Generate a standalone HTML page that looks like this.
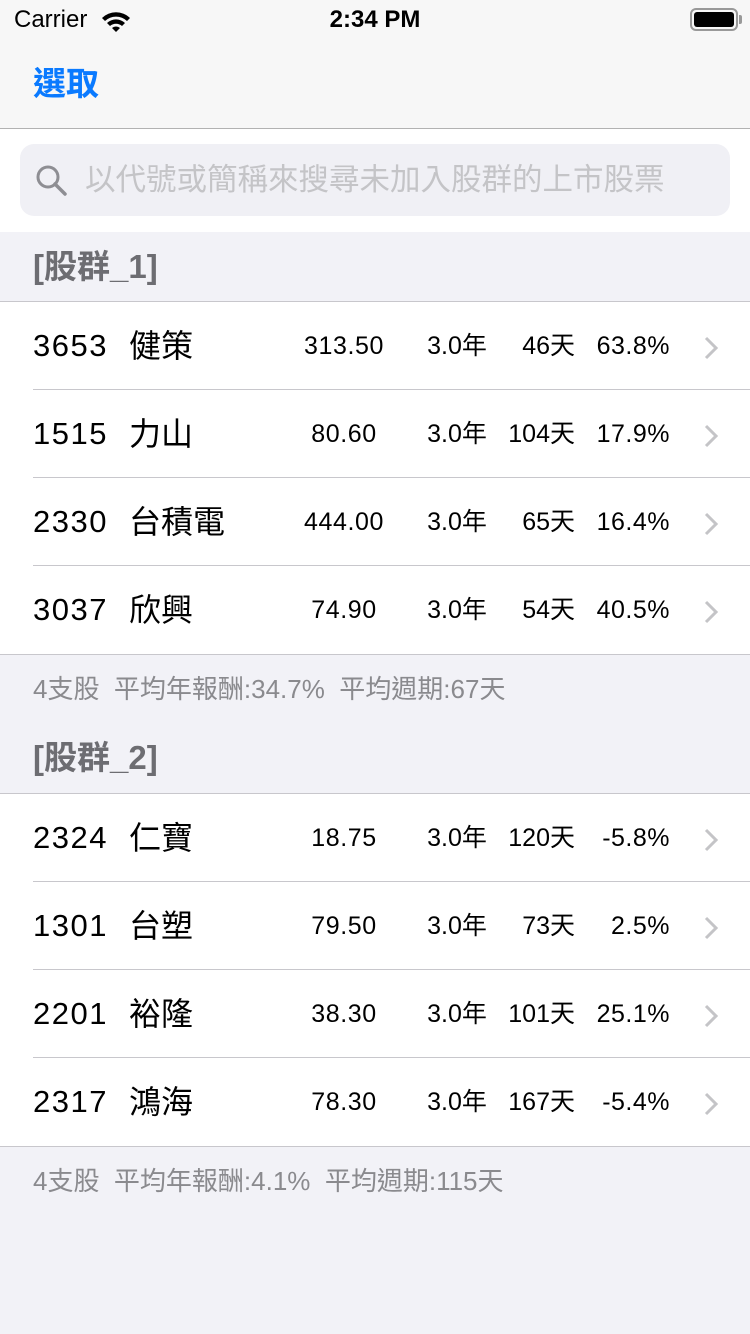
<!DOCTYPE html>
<html><head><meta charset="utf-8"><style>
*{margin:0;padding:0;box-sizing:border-box}
body{width:750px;height:1334px;background:#f2f2f7;font-family:"Liberation Sans","Noto Sans CJK TC",sans-serif;position:relative;overflow:hidden}
.a{position:absolute;white-space:nowrap}
.row{position:absolute;left:0;width:750px;height:88px;background:#fff}
.row div{line-height:88px;white-space:nowrap}
.row .l{position:absolute;left:33px;right:0;bottom:0;height:1px;background:#c8c7cc}
.code{position:absolute;left:33px;top:0;font-size:31px;letter-spacing:1.5px;color:#000}
.nm{position:absolute;left:129px;top:0;font-size:32px;color:#000}
.p{position:absolute;left:284px;width:120px;text-align:center;top:0;font-size:25px;letter-spacing:0.6px}
.y{position:absolute;left:400px;width:114px;text-align:center;top:0;font-size:25px}
.d{position:absolute;right:175px;top:0;font-size:25px}
.r{position:absolute;right:80px;top:0;font-size:25px;letter-spacing:0.5px}
.ch{position:absolute;left:703px;top:34px}
.hd{position:absolute;left:33px;font-size:33px;font-weight:bold;color:#6d6d72;line-height:40px}
.ft{position:absolute;left:33px;font-size:26px;color:#8a8a8e;line-height:30px}
.hl{position:absolute;left:0;width:750px;height:1px;background:#c8c7cc}
</style></head><body>
<div class="a" style="left:0;top:0;width:750px;height:128px;background:#f7f7f7"></div>
<div class="a" style="left:14px;top:6px;font-size:24px">Carrier</div>
<svg class="a" style="left:100px;top:10px" width="32" height="24" viewBox="0 0 32 24"><path d="M2 8 A20 20 0 0 1 30 8 L27 11 A16 16 0 0 0 5 11Z M7 13 A13 13 0 0 1 25 13 L22 16 A9 9 0 0 0 10 16Z M12 18 A6 6 0 0 1 20 18 L16 22Z" fill="#000"/></svg>
<div class="a" style="left:0;width:750px;text-align:center;top:6px;font-size:24px;font-weight:bold">2:34 PM</div>
<div class="a" style="left:690px;top:8px;width:48px;height:23px;border:2px solid #999;border-radius:6px"></div>
<div class="a" style="left:694px;top:12px;width:40px;height:15px;background:#000;border-radius:3px"></div>
<div class="a" style="left:739px;top:15px;width:3px;height:9px;background:#999;border-radius:0 2px 2px 0"></div>
<div class="a" style="left:33px;top:64px;font-size:33px;color:#0a7aff;font-weight:bold;line-height:40px">選取</div>
<div class="hl" style="top:128px;background:#b2b2b2"></div>
<div class="a" style="left:0;top:129px;width:750px;height:103px;background:#fff"></div>
<div class="a" style="left:20px;top:144px;width:710px;height:72px;background:#f0f0f5;border-radius:14px"></div>
<svg class="a" style="left:35px;top:164px" width="34" height="34" viewBox="0 0 34 34"><circle cx="13" cy="13" r="10" fill="none" stroke="#8e8e93" stroke-width="3"/><path d="M20 20 L30 30" stroke="#8e8e93" stroke-width="3.5" stroke-linecap="round"/></svg>
<div class="a" style="left:85px;top:160px;font-size:30.5px;color:#c4c4c7;line-height:40px">以代號或簡稱來搜尋未加入股群的上市股票</div>

<div class="hd" style="top:247px">[股群_1]</div>
<div class="hl" style="top:301px"></div>
<div class="row" style="top:302px"><div class="code">3653</div><div class="nm">健策</div><div class="p">313.50</div><div class="y">3.0年</div><div class="d">46天</div><div class="r">63.8%</div><svg class="ch" width="16" height="24"><path d="M3 2 L13 12 L3 22" fill="none" stroke="#c4c4c7" stroke-width="3"/></svg><div class="l"></div></div>
<div class="row" style="top:390px"><div class="code">1515</div><div class="nm">力山</div><div class="p">80.60</div><div class="y">3.0年</div><div class="d">104天</div><div class="r">17.9%</div><svg class="ch" width="16" height="24"><path d="M3 2 L13 12 L3 22" fill="none" stroke="#c4c4c7" stroke-width="3"/></svg><div class="l"></div></div>
<div class="row" style="top:478px"><div class="code">2330</div><div class="nm">台積電</div><div class="p">444.00</div><div class="y">3.0年</div><div class="d">65天</div><div class="r">16.4%</div><svg class="ch" width="16" height="24"><path d="M3 2 L13 12 L3 22" fill="none" stroke="#c4c4c7" stroke-width="3"/></svg><div class="l"></div></div>
<div class="row" style="top:566px"><div class="code">3037</div><div class="nm">欣興</div><div class="p">74.90</div><div class="y">3.0年</div><div class="d">54天</div><div class="r">40.5%</div><svg class="ch" width="16" height="24"><path d="M3 2 L13 12 L3 22" fill="none" stroke="#c4c4c7" stroke-width="3"/></svg></div>
<div class="hl" style="top:654px"></div>
<div class="ft" style="top:674px">4支股&nbsp; 平均年報酬:34.7%&nbsp; 平均週期:67天</div>

<div class="hd" style="top:738px">[股群_2]</div>
<div class="hl" style="top:793px"></div>
<div class="row" style="top:794px"><div class="code">2324</div><div class="nm">仁寶</div><div class="p">18.75</div><div class="y">3.0年</div><div class="d">120天</div><div class="r">-5.8%</div><svg class="ch" width="16" height="24"><path d="M3 2 L13 12 L3 22" fill="none" stroke="#c4c4c7" stroke-width="3"/></svg><div class="l"></div></div>
<div class="row" style="top:882px"><div class="code">1301</div><div class="nm">台塑</div><div class="p">79.50</div><div class="y">3.0年</div><div class="d">73天</div><div class="r">2.5%</div><svg class="ch" width="16" height="24"><path d="M3 2 L13 12 L3 22" fill="none" stroke="#c4c4c7" stroke-width="3"/></svg><div class="l"></div></div>
<div class="row" style="top:970px"><div class="code">2201</div><div class="nm">裕隆</div><div class="p">38.30</div><div class="y">3.0年</div><div class="d">101天</div><div class="r">25.1%</div><svg class="ch" width="16" height="24"><path d="M3 2 L13 12 L3 22" fill="none" stroke="#c4c4c7" stroke-width="3"/></svg><div class="l"></div></div>
<div class="row" style="top:1058px"><div class="code">2317</div><div class="nm">鴻海</div><div class="p">78.30</div><div class="y">3.0年</div><div class="d">167天</div><div class="r">-5.4%</div><svg class="ch" width="16" height="24"><path d="M3 2 L13 12 L3 22" fill="none" stroke="#c4c4c7" stroke-width="3"/></svg></div>
<div class="hl" style="top:1146px"></div>
<div class="ft" style="top:1166px">4支股&nbsp; 平均年報酬:4.1%&nbsp; 平均週期:115天</div>
</body></html>
